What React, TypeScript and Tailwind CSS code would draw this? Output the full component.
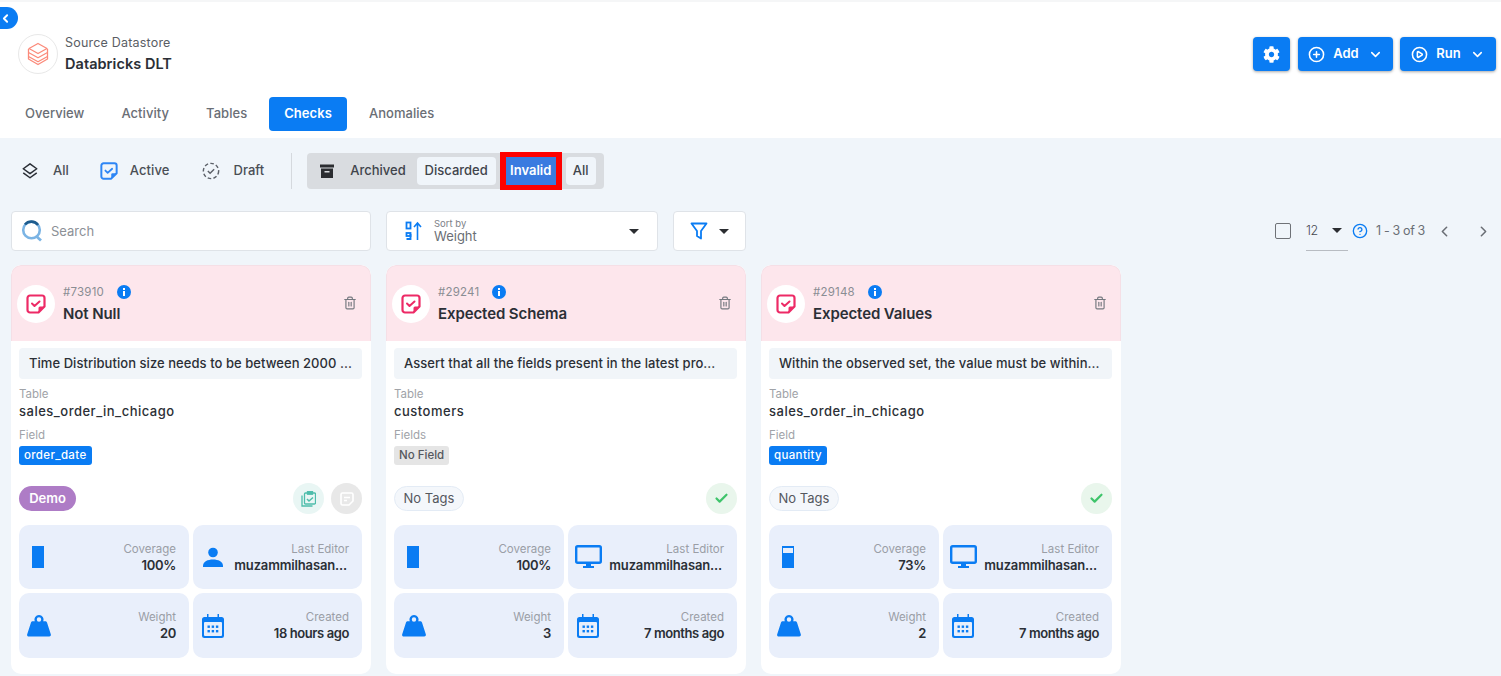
import React from "react";
import { ChevronLeft, ChevronRight, ChevronDown, CirclePlus, CirclePlay, Trash2, Check, CircleHelp } from "lucide-react";
import { FaCog } from "react-icons/fa";

const F = "font-['Inter','Noto_Sans',sans-serif]";

function NoteCheck({ color = "#2563eb", size = 18, fill = "none" }: { color?: string; size?: number; fill?: string }) {
  return (
    <svg width={size} height={size} viewBox="0 0 20 20" fill={fill}>
      <path d="M4 1.5h12A2.5 2.5 0 0 1 18.5 4v8.5l-6 6H4A2.5 2.5 0 0 1 1.500 16V4A2.5 2.5 0 0 1 4 1.500Z" stroke={color} strokeWidth="2.200" strokeLinejoin="round" />
      <path d="M18.500 12.500h-4.500a1.500 1.500 0 0 0-1.500 1.500v4.500Z" fill={color} />
      <path d="M6 9.500l2.500 2.500 5-4.500" stroke={color} strokeWidth="2" strokeLinecap="round" strokeLinejoin="round" />
    </svg>
  );
}

function WeightIcon() {
  return (
    <svg width="24" height="22" viewBox="0 0 24 22" fill="#0a7cf3">
      <path fillRule="evenodd" d="M12 0a4.500 4.500 0 0 1 4.200 6.200h1.900c.9 0 1.600.5 1.900 1.400l3.800 11.600c.3 1.200-.2 2.300-1.500 2.300H1.700C.4 21.500-.2 20.400.2 19.200L4 7.600c.3-.9 1-1.400 1.900-1.400h1.900A4.500 4.500 0 0 1 12 0Zm0 2.300a2.200 2.200 0 1 0 0 4.400 2.200 2.200 0 0 0 0-4.400Z" />
    </svg>
  );
}

function CalendarIcon() {
  return (
    <svg width="22" height="24" viewBox="0 0 22 24">
      <path d="M5 0h1.500v3H15.500V0H17v3h2.500A2.500 2.500 0 0 1 22 5.500v16a2.500 2.500 0 0 1-2.500 2.500h-17A2.500 2.500 0 0 1 0 21.500v-16A2.500 2.500 0 0 1 2.500 3H5Z" fill="#0a7cf3" />
      <rect x="2" y="8" width="18" height="14" rx="1" fill="#e9effb" />
      {[5.500, 9.700, 13.900].map((x) => <rect key={x} x={x} y="11.500" width="2.400" height="2.400" fill="#0a7cf3" />)}
      {[5.500, 9.700, 13.900].map((x) => <rect key={x} x={x} y="16" width="2.400" height="2.400" fill="#0a7cf3" />)}
    </svg>
  );
}

function MonitorIcon() {
  return (
    <svg width="27" height="24" viewBox="0 0 27 24" fill="none" className="shrink-0">
      <rect x="1.200" y="1.200" width="24.600" height="16.500" rx="1.500" stroke="#0a7cf3" strokeWidth="2.400" />
      <path d="M11 18.500h5v2.500h3v2h-11v-2h3Z" fill="#0a7cf3" />
    </svg>
  );
}

function PersonIcon() {
  return (
    <svg width="20" height="20" viewBox="0 0 20 20" fill="#0a7cf3">
      <circle cx="10" cy="5.500" r="4.800" />
      <path d="M0 19c0-4.500 4.800-6.500 10-6.500S20 14.500 20 19v1H0Z" />
    </svg>
  );
}

function Stat({ icon, label, value, cls }: { icon: React.ReactNode; label: string; value: string; cls?: string }) {
  return (
    <div className="flex items-center justify-between rounded-[10px] bg-[#e9effb] pl-[7px] pr-[13px]">
      <div className="flex w-[26px] shrink-0 items-center justify-center">{icon}</div>
      <div className="flex min-w-0 flex-col items-end">
        <span className="text-[11.500px] leading-4 text-[#9a9ea6]">{label}</span>
        <span className={`text-[13px] font-semibold leading-[17px] text-[#2b2f36] ${cls ?? "tracking-[-0.3px]"}`}>{value}</span>
      </div>
    </div>
  );
}

function CoverageBar({ pct }: { pct: number }) {
  return (
    <div className="mr-[2px] flex h-[22px] w-3 flex-col border border-[#0a7cf3] bg-[#0a7cf3]">
      <div className="bg-[#e9effb]" style={{ height: `${100 - pct}%`, opacity: pct === 100 ? 0 : 1, marginTop: 1 }} />
    </div>
  );
}

type CardData = {
  id: string; title: string; desc: string; table: string; fieldLabel: string; field: string; fieldBlue: boolean;
  demo: boolean; pct: number; editorIcon: React.ReactNode; weight: string; created: string;
};

function Card({ c }: { c: CardData }) {
  return (
    <div className="flex h-[409px] w-[360px] flex-col overflow-hidden rounded-[10px] bg-white">
      <div className="flex h-[76px] shrink-0 items-center rounded-t-[10px] border border-b-0 border-[#f5dfe6] bg-[#fde6ec] pl-[5px] pr-[13px]">
        <div className="flex h-[38px] w-[38px] items-center justify-center rounded-full bg-white">
          <NoteCheck color="#ed2a66" size={20} />
        </div>
        <div className="ml-2 flex flex-1 flex-col">
          <div className="mt-[1px] flex items-center">
            <span className="text-[11.500px] leading-4 tracking-[0.2px] text-[#8a8d93]">#{c.id}</span>
            <span className="relative ml-[13px] flex h-[14px] w-[14px] items-center justify-center rounded-full bg-[#0a7cf3]">
              <span className="absolute left-[6px] top-[3px] h-[2px] w-[2px] bg-white" />
              <span className="absolute left-[6px] top-[6px] h-[5px] w-[2px] bg-white" />
            </span>
          </div>
          <div className="mt-[4px] text-[15px] font-semibold leading-5 tracking-[-0.1px] text-[#2b2f36]">{c.title}</div>
        </div>
        <Trash2 size={14} className="-mt-[2px] text-[#74787f]" />
      </div>
      <div className="flex flex-1 flex-col pb-4 pl-2 pr-[9px] pt-[7px]">
        <div className="flex h-[31px] items-center overflow-hidden whitespace-nowrap rounded bg-[#f1f5f9] px-[10px] text-[13px] font-medium tracking-[0.05px] text-[#2b2f36]">{c.desc}</div>
        <div className="mt-[7px] text-[11.500px] leading-4 text-[#a0a3a8]">Table</div>
        <div className="text-[13px] font-medium leading-[18px] tracking-[0.5px] text-[#2b2f36]">{c.table}</div>
        <div className="mt-[7px] text-[11.500px] leading-4 text-[#a0a3a8]">{c.fieldLabel}</div>
        <div className="mt-[3px] flex">
          <span className={`flex h-[19px] items-center rounded-[3px] px-[5px] text-[11.500px] font-medium ${c.fieldBlue ? "bg-[#0a7cf3] tracking-[0.35px] text-white" : "bg-[#e5e5e5] text-[#55585e]"}`}>{c.field}</span>
        </div>
        <div className="mt-[18px] flex h-[31px] items-center justify-between">
          {c.demo ? (
            <span className="flex h-[25px] w-[57px] items-center justify-center rounded-full bg-[#ae7cc6] text-[13px] font-semibold text-white">Demo</span>
          ) : (
            <span className="flex h-[25px] w-[70px] items-center justify-center rounded-full border border-[#e3ebf5] bg-[#f4f7fb] text-[13px] text-[#55585e]">No Tags</span>
          )}
          {c.demo ? (
            <div className="flex gap-[7px]">
              <span className="flex h-[31px] w-[31px] items-center justify-center rounded-full bg-[#e9f6f4]">
                <svg width="15" height="16" viewBox="0 0 15 16" fill="none" stroke="#4dbdab" strokeWidth="1.300">
                  <rect x="3.500" y="2" width="11" height="11" rx="1" />
                  <path d="M1 4.500V15h10.500" />
                  <rect x="6.500" y="0.700" width="5" height="2.500" fill="#4dbdab" />
                  <path d="M6 8l2 2 4-3.500" strokeWidth="1.500" />
                </svg>
              </span>
              <span className="flex h-[31px] w-[31px] items-center justify-center rounded-full bg-[#e8e8e8]">
                <svg width="14" height="14" viewBox="0 0 14 14" fill="none" stroke="#ffffff" strokeWidth="1.600">
                  <path d="M2.500 1h9A1.500 1.500 0 0 1 13 2.500V9l-4 4H2.500A1.500 1.500 0 0 1 1 11.500v-9A1.500 1.500 0 0 1 2.500 1Z" />
                  <path d="M4 5.500h6M4 8.500h3" />
                </svg>
              </span>
            </div>
          ) : (
            <span className="flex h-[31px] w-[31px] items-center justify-center rounded-full bg-[#e9f6ec]">
              <Check size={15} strokeWidth={3.500} className="text-[#3fc46b]" />
            </span>
          )}
        </div>
        <div className="mt-[11px] grid h-[133px] grid-cols-[170px_169px] grid-rows-[64px_65px] gap-[4px]">
          <Stat icon={<CoverageBar pct={c.pct} />} label="Coverage" value={`${c.pct}%`} />
          <Stat icon={c.editorIcon} label="Last Editor" value="muzammilhasan..." cls="mr-[2px] tracking-[-0.15px]" />
          <Stat icon={<WeightIcon />} label="Weight" value={c.weight} />
          <Stat icon={<CalendarIcon />} label="Created" value={c.created} cls="tracking-[-0.4px]" />
        </div>
      </div>
    </div>
  );
}

const cards: CardData[] = [
  { id: "73910", title: "Not Null", desc: "Time Distribution size needs to be between 2000 ...", table: "sales_order_in_chicago", fieldLabel: "Field", field: "order_date", fieldBlue: true, demo: true, pct: 100, editorIcon: <PersonIcon />, weight: "20", created: "18 hours ago" },
  { id: "29241", title: "Expected Schema", desc: "Assert that all the fields present in the latest pro...", table: "customers", fieldLabel: "Fields", field: "No Field", fieldBlue: false, demo: false, pct: 100, editorIcon: <MonitorIcon />, weight: "3", created: "7 months ago" },
  { id: "29148", title: "Expected Values", desc: "Within the observed set, the value must be within...", table: "sales_order_in_chicago", fieldLabel: "Field", field: "quantity", fieldBlue: true, demo: false, pct: 73, editorIcon: <MonitorIcon />, weight: "2", created: "7 months ago" },
];

function Tab({ label, active }: { label: string; active?: boolean }) {
  return (
    <span className={`flex h-[34px] items-center rounded px-[15px] text-[13px] tracking-[0.05px] ${active ? "bg-[#0a7cf3] font-semibold text-white" : "font-medium text-[#6a6e75]"}`}>{label}</span>
  );
}

function BlueBtn({ children, w }: { children: React.ReactNode; w: string }) {
  return (
    <button className={`flex h-[34px] items-center justify-center gap-2 rounded-[4px] bg-[#0a7cf3] text-[13px] font-semibold text-white shadow-[0_1px_3px_rgba(0,0,0,0.35)] ${w}`}>{children}</button>
  );
}

export default function App() {
  return (
    <div className={`relative h-[676px] w-[1501px] overflow-hidden bg-[#f0f5fa] ${F}`}>
      <button className="absolute left-0 top-[7px] z-10 flex h-[22px] w-[18px] items-center justify-start rounded-r-full bg-[#0a7cf3] text-white">
        <ChevronLeft size={13} strokeWidth={3.500} className="-ml-[1px]" />
      </button>

      <header className="h-[138px] border-t-2 border-[#f5f6f7] bg-white">
        <div className="flex items-start justify-between pl-[18px] pr-[5px] pt-[32px]">
          <div className="flex items-center gap-[7px]">
            <div className="flex h-[40px] w-[40px] items-center justify-center rounded-full border border-[#e8e8e8]">
              <svg width="22" height="24" viewBox="0 0 22 24" fill="none" stroke="#fb8a7a" strokeWidth="1.300" strokeLinejoin="round">
                <path d="M11 1.500l9 5-9 5-9-5Z" />
                <path d="M1.500 10.500l9.500 5.200 9.500-5.200" />
                <path d="M1.500 14.500l9.500 5.200 9.500-5.200" />
                <path d="M1.500 7v10l9.500 5.500 9.500-5.500V7" />
              </svg>
            </div>
            <div className="-mt-[1px] flex flex-col">
              <span className="text-[12.500px] leading-[18px] tracking-[0.2px] text-[#5a5e65]">Source Datastore</span>
              <span className="mt-[2px] text-[14.500px] font-semibold leading-5 tracking-[0.05px] text-[#2b2f36]">Databricks DLT</span>
            </div>
          </div>
          <div className="mt-[3px] flex">
            <BlueBtn w="w-[37px]"><FaCog size={17} /></BlueBtn>
            <BlueBtn w="ml-[8px] w-[95px]"><CirclePlus size={17} strokeWidth={2.200} />Add<ChevronDown size={15} strokeWidth={2.500} className="ml-[1px]" /></BlueBtn>
            <BlueBtn w="ml-[7px] w-[96px]"><CirclePlay size={17} strokeWidth={2.200} />Run<ChevronDown size={15} strokeWidth={2.500} className="ml-[1px]" /></BlueBtn>
          </div>
        </div>
        <nav className="mt-[23px] flex gap-[7px] pl-[10px]">
          <Tab label="Overview" />
          <Tab label="Activity" />
          <Tab label="Tables" />
          <Tab label="Checks" active />
          <Tab label="Anomalies" />
        </nav>
      </header>

      <div className="flex h-[73px] items-center pb-[7px] pl-[21px]">
        <div className="flex items-center text-[13px] font-medium text-[#4a4e55]">
          <svg width="18" height="18" viewBox="0 0 20 20" fill="none" stroke="#2b2f36" strokeWidth="1.700" strokeLinejoin="round">
            <path d="M10 2l7.500 5.500L10 13 2.500 7.500Z" />
            <path d="M2.500 12l7.500 5.500 7.500-5.500" />
          </svg>
          <span className="ml-[14px]">All</span>
          <span className="ml-[31px]"><NoteCheck size={18} color="#2e86f5" /></span>
          <span className="ml-[12px] tracking-[0.1px]">Active</span>
          <span className="ml-[32px]">
            <svg width="18" height="18" viewBox="0 0 20 20" fill="none" stroke="#5c6068" strokeWidth="1.600">
              <circle cx="10" cy="10" r="8.500" strokeDasharray="4 2.500" />
              <path d="M6.500 10l2.500 2.500 4.500-4.500" />
            </svg>
          </span>
          <span className="ml-[14px]">Draft</span>
        </div>
        <div className="ml-[27px] h-[36px] w-px bg-[#d5d9de]" />
        <div className="ml-[15px] flex h-[36px] w-[297px] items-center rounded bg-[#d9dce0] pl-[12px] text-[13px] font-medium text-[#40444b]">
          <svg width="16" height="16" viewBox="0 0 16 16" fill="#2b2d31"><path d="M1 1.500h14v3H1Z" /><path fillRule="evenodd" d="M2 5.500h12V15H2Zm3.500 2.500v1.500h5V8Z" /></svg>
          <span className="ml-[15px]">Archived</span>
          <span className="ml-[11px] flex h-[28px] w-[79px] items-center justify-center rounded bg-[#f0f5fa]">Discarded</span>
          <span className="ml-[4px] flex h-[38px] w-[62px] items-center justify-center border-x-[6px] border-y-[5px] border-[#ff0000] bg-[#3a7be0] font-semibold text-white">Invalid</span>
          <span className="ml-[4px] flex h-[28px] w-[30px] items-center justify-center rounded bg-[#f0f5fa]">All</span>
        </div>
      </div>

      <div className="flex h-[54px] items-start pl-[11px] pr-[9px]">
        <div className="flex h-[40px] w-[360px] items-center rounded border border-[#dfe3e8] bg-white pl-[9px]">
          <svg width="22" height="22" viewBox="0 0 22 22" fill="none">
            <circle cx="10.500" cy="10" r="8.300" stroke="#7bb4e4" strokeWidth="2.600" />
            <path d="M4 4.500A8.300 8.300 0 0 1 17 5" stroke="#1d5c8e" strokeWidth="2.600" />
            <path d="M15 16l5 4.500" stroke="#7bb4e4" strokeWidth="2.800" />
          </svg>
          <span className="ml-[8px] mt-[1px] text-[13px] text-[#8c9096]">Search</span>
        </div>
        <div className="ml-[15px] flex h-[40px] w-[272px] items-center rounded border border-[#dfe3e8] bg-white pl-[18px] pr-[18px]">
          <svg width="18" height="20" viewBox="0 0 18 20" fill="none">
            <rect x="1.500" y="1.500" width="4" height="6" stroke="#0a7cf3" strokeWidth="1.800" />
            <rect x="1.500" y="12" width="4" height="3" stroke="#0a7cf3" strokeWidth="1.800" />
            <path d="M5.500 13v5H1.500" stroke="#0a7cf3" strokeWidth="1.800" />
            <path d="M12.500 19V2M9 6l3.500-4L16 6" stroke="#0a7cf3" strokeWidth="1.600" />
          </svg>
          <div className="ml-[11px] flex flex-1 flex-col">
            <span className="text-[9.500px] leading-[11px] text-[#7d8187]">Sort by</span>
            <span className="text-[13px] leading-[15px] text-[#6a6e75]">Weight</span>
          </div>
          <span className="h-0 w-0 border-x-[5px] border-t-[5px] border-x-transparent border-t-[#2b2d31]" />
        </div>
        <div className="ml-[15px] flex h-[40px] w-[73px] items-center justify-center gap-[11px] rounded border border-[#dfe3e8] bg-white">
          <svg width="18" height="18" viewBox="0 0 18 18" fill="none" stroke="#0a7cf3" strokeWidth="1.800" strokeLinejoin="round"><path d="M1.500 1.500h15L11 9v7.500l-4-2.500V9Z" /></svg>
          <span className="h-0 w-0 border-x-[5px] border-t-[5px] border-x-transparent border-t-[#2b2d31]" />
        </div>
        <div className="ml-auto flex h-[40px] items-center text-[12.500px] tracking-[-0.35px] text-[#6a6e75]">
          <span className="h-[16px] w-[16px] rounded-[2px] border-[1.500px] border-[#6f7277] bg-transparent" />
          <div className="relative ml-[15px] flex h-[40px] w-[42px] items-center border-b border-[#b8bcc2] pt-[1px]">
            <span className="font-light text-[#45484e]">12</span>
            <span className="absolute right-[6px] top-[17px] h-0 w-0 border-x-[5px] border-t-[5px] border-x-transparent border-t-[#2b2d31]" />
          </div>
          <CircleHelp size={16} className="ml-[4px] text-[#0a7cf3]" />
          <span className="ml-[8px]">1 - 3 of 3</span>
          <ChevronLeft size={17} className="ml-[11px] text-[#6a6e75]" strokeWidth={2.200} />
          <ChevronRight size={17} className="ml-[22px] text-[#6a6e75]" strokeWidth={2.200} />
        </div>
      </div>

      <div className="flex gap-[15px] pl-[11px]">
        {cards.map((c) => <Card key={c.id} c={c} />)}
      </div>
    </div>
  );
}
